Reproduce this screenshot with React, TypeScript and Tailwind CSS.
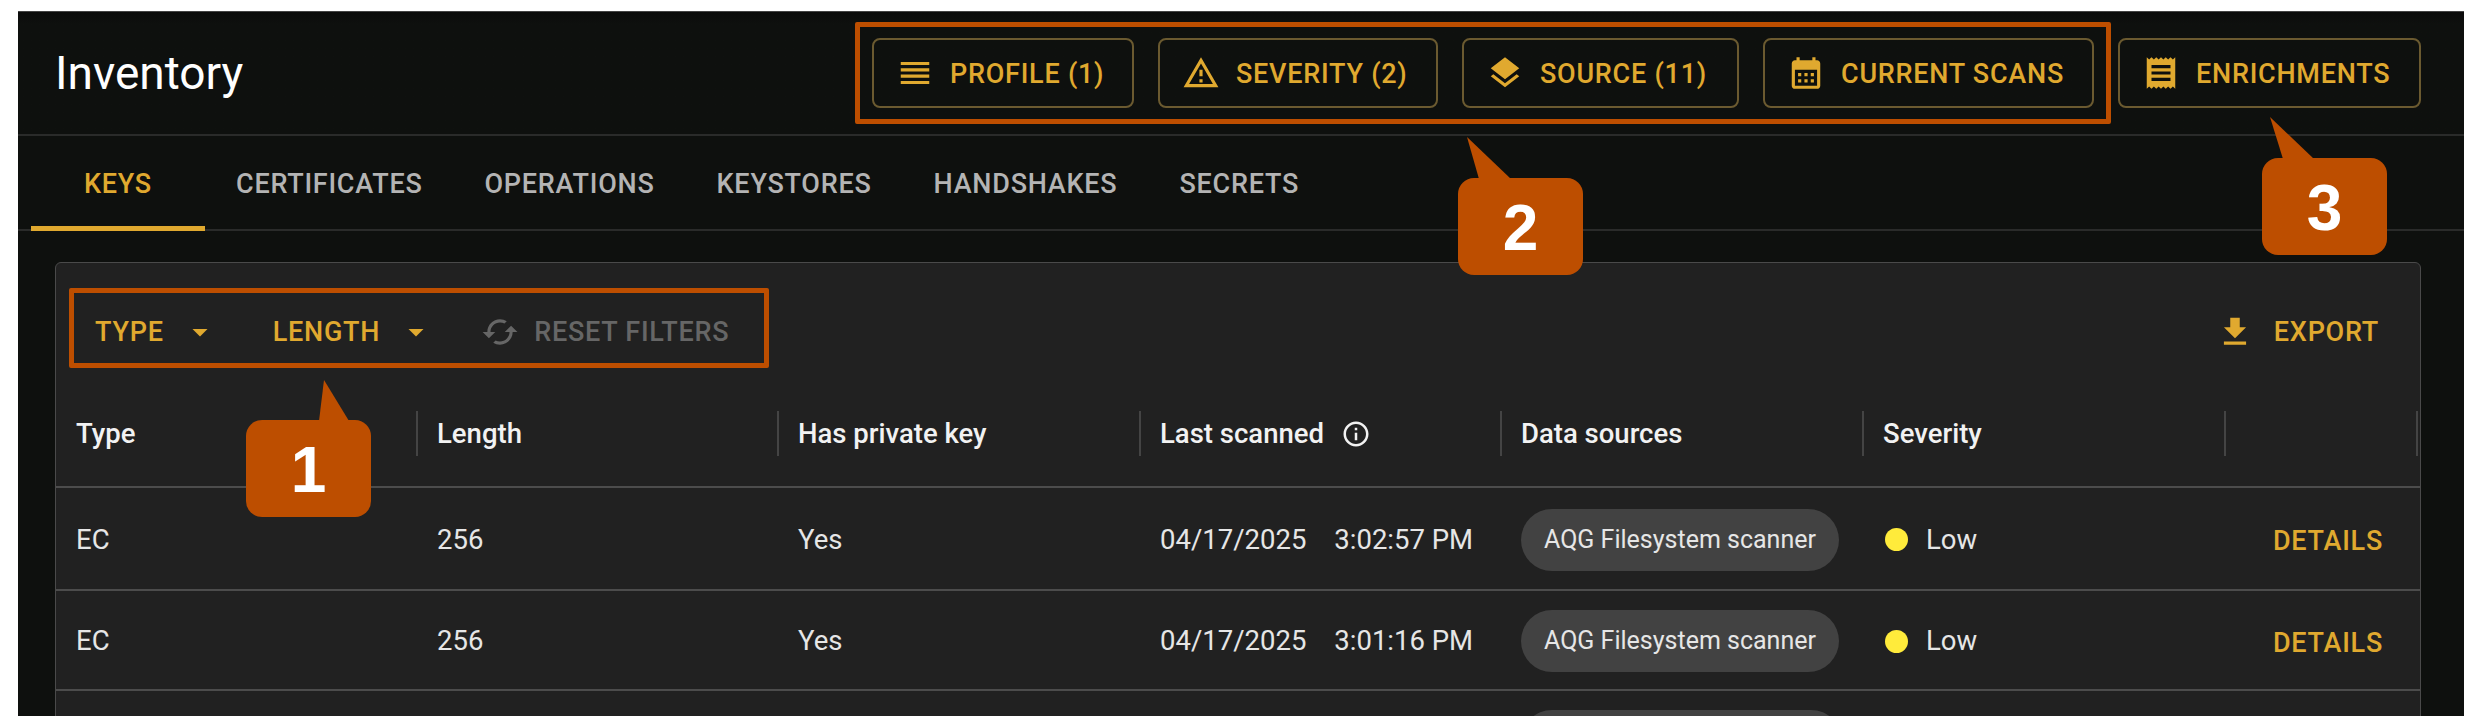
import React from "react";

const GOLD = "text-[#e0a92f]";

const icons = {
  profile: "M3 15h18v-2H3v2zm0 4h18v-2H3v2zm0-8h18V9H3v2zm0-6v2h18V5H3z",
  severity: "M12 5.99 19.53 19H4.47L12 5.99M12 2 1 21h22L12 2zm1 14h-2v2h2v-2zm0-6h-2v4h2v-4z",
  source: "m11.99 18.54-7.37-5.73L3 14.07l9 7 9-7-1.63-1.27-7.38 5.74zM12 16l7.36-5.73L21 9l-9-7-9 7 1.63 1.27L12 16z",
  calendar: "M19 4h-1V2h-2v2H8V2H6v2H5c-1.11 0-1.99.9-1.99 2L3 20c0 1.1.89 2 2 2h14c1.1 0 2-.9 2-2V6c0-1.1-.9-2-2-2zm0 16H5V10h14v10zM9 14H7v-2h2v2zm4 0h-2v-2h2v2zm4 0h-2v-2h2v2zm-8 4H7v-2h2v2zm4 0h-2v-2h2v2zm4 0h-2v-2h2v2z",
  receipt: "M18 17H6v-2h12v2zm0-4H6v-2h12v2zm0-4H6V7h12v2zM3 22l1.5-1.5L6 22l1.5-1.5L9 22l1.5-1.5L12 22l1.5-1.5L15 22l1.5-1.5L18 22l1.5-1.5L21 22V2l-1.5 1.5L18 2l-1.5 1.5L15 2l-1.5 1.5L12 2l-1.5 1.5L9 2 7.5 3.5 6 2 4.5 3.5 3 2v20z",
  cached: "m19 8-4 4h3c0 3.31-2.69 6-6 6-1.01 0-1.97-.25-2.8-.7l-1.46 1.46C8.97 19.54 10.43 20 12 20c4.42 0 8-3.58 8-8h3l-4-4zM6 12c0-3.31 2.69-6 6-6 1.01 0 1.97.25 2.8.7l1.46-1.46C15.03 4.46 13.57 4 12 4c-4.42 0-8 3.58-8 8H1l4 4 4-4H6z",
  download: "M5 20h14v-2H5v2zM19 9h-4V3H9v6H5l7 7 7-7z",
  info: "M11 7h2v2h-2zm0 4h2v6h-2zm1-9C6.48 2 2 6.48 2 12s4.48 10 10 10 10-4.48 10-10S17.52 2 12 2zm0 18c-4.41 0-8-3.59-8-8s3.59-8 8-8 8 3.59 8 8-3.59 8-8 8z",
  arrow: "m7 10 5 5 5-5z",
};

function Icon({ d, className }: { d: string; className: string }) {
  return (
    <svg viewBox="0 0 24 24" fill="currentColor" className={className}>
      <path d={d} />
    </svg>
  );
}

const BUTTONS = [
  { label: "PROFILE (1)", icon: icons.profile, width: "w-[262px]" },
  { label: "SEVERITY (2)", icon: icons.severity, width: "w-[280px]" },
  { label: "SOURCE (11)", icon: icons.source, width: "w-[277px]" },
  { label: "CURRENT SCANS", icon: icons.calendar, width: "w-[331px]" },
  { label: "ENRICHMENTS", icon: icons.receipt, width: "w-[303px]" },
];

const TABS = ["KEYS", "CERTIFICATES", "OPERATIONS", "KEYSTORES", "HANDSHAKES", "SECRETS"];

const HEADERS = ["Type", "Length", "Has private key", "Last scanned", "Data sources", "Severity", ""];

const ROWS = [
  { time: "3:02:57 PM", height: "h-[103px]" },
  { time: "3:01:16 PM", height: "h-[100px]" },
];

const COLS = "grid grid-cols-[362px_361px_362px_361px_362px_362px_1fr]";
const CELL = "pl-[19px] first:pl-[20px]";

// callout bubble with a pointer, sits on top of the page
function Callout({ n, left, top, tip, base }: { n: string; left: string; top: string; tip: string; base: string }) {
  return (
    <div className={`absolute ${left} ${top} w-[125px] h-[97px] rounded-[16px] bg-[#bd4e00] flex items-center justify-center`}>
      <svg className="absolute left-0 bottom-[96px] overflow-visible" width="125" height="45" viewBox="0 0 125 45">
        <polygon points={`${tip} ${base}`} fill="#bd4e00" />
      </svg>
      <span className="font-['Liberation_Sans',sans-serif] font-bold text-[64px] leading-none text-white mt-[2px]">{n}</span>
    </div>
  );
}

export default function App() {
  return (
    <div className="relative w-[2478px] h-[728px] bg-white overflow-hidden font-['Roboto',sans-serif]">
      <div className="ml-[18px] mt-[11px] w-[2446px] h-[705px] bg-[#0e100e] border-t border-[#444] overflow-hidden absolute">
        <header className="h-[124px] flex items-center justify-between border-b-2 border-[#2a2b2a] pl-[37px] pr-[43px] bg-gradient-to-b from-[#0b0b0b] from-0% to-[#0e100e] to-10%">
          <h1 className="text-[46px] font-normal text-white leading-none -mt-[1px]">Inventory</h1>
          <div className="flex gap-[24px]">
            {BUTTONS.map((b) => (
              <button
                key={b.label}
                className={`${b.width} h-[70px] rounded-[8px] border-2 border-[#6b5a30] flex items-center pl-[22px] gap-[16px] ${GOLD} text-[27px] font-medium tracking-[0.75px]`}
              >
                <Icon d={b.icon} className="w-[38px] h-[38px]" />
                <span className="pt-[2px]">{b.label}</span>
              </button>
            ))}
          </div>
        </header>

        <nav className="h-[95px] flex pl-[13px] border-b-2 border-[#2a2b2a]">
          {TABS.map((t, i) => (
            <div
              key={t}
              className={`relative px-[31px] min-w-[174px] pt-[3px] flex items-center justify-center text-[27px] font-medium tracking-[0.75px] ${i === 0 ? GOLD : "text-[#b4b4b4]"}`}
            >
              {t}
              {i === 0 && <div className="absolute left-0 right-0 bottom-[-2px] h-[5px] bg-[#e0a92f]" />}
            </div>
          ))}
        </nav>

        <main className="ml-[37px] mr-[43px] mt-[31px] rounded-t-[6px] border border-[#4a4a4a] bg-[#212121] h-[500px]">
          <div className="h-[118px] flex items-center justify-between pl-[39px] pr-[41px] pt-[20px] text-[27px] font-medium tracking-[0.75px]">
            <div className="flex items-center">
              <span className={GOLD}>TYPE</span>
              <Icon d={icons.arrow} className={`w-[36px] h-[36px] ml-[18px] ${GOLD}`} />
              <span className={`${GOLD} ml-[55px]`}>LENGTH</span>
              <Icon d={icons.arrow} className={`w-[36px] h-[36px] ml-[18px] ${GOLD}`} />
              <Icon d={icons.cached} className="w-[38px] h-[38px] ml-[47px] text-[#666]" />
              <span className="ml-[15px] text-[#666]">RESET FILTERS</span>
            </div>
            <div className={`flex items-center gap-[20px] ${GOLD}`}>
              <Icon d={icons.download} className="w-[38px] h-[38px]" />
              EXPORT
            </div>
          </div>

          <div className={`${COLS} h-[107px] items-center border-b-2 border-[#4c4c4c] text-[27.5px] font-medium text-[#f2f2f2]`}>
            {HEADERS.map((h) => (
              <div key={h} className={`${CELL} h-[45px] flex items-center gap-[17px] border-r-2 border-[#444] last:mr-[2px]`}>
                {h}
                {h === "Last scanned" && <Icon d={icons.info} className="w-[30px] h-[30px]" />}
              </div>
            ))}
          </div>

          {ROWS.map((r) => (
            <div key={r.time} className={`${COLS} ${r.height} pt-[2px] items-center border-b-2 border-[#4c4c4c] text-[27.5px] text-[#e6e6e6]`}>
              <div className={CELL}>EC</div>
              <div className={CELL}>256</div>
              <div className={CELL}>Yes</div>
              <div className={`${CELL} flex gap-[28px]`}>
                <span>04/17/2025</span>
                <span>{r.time}</span>
              </div>
              <div className={CELL}>
                <span className="inline-flex items-center h-[62px] px-[23px] rounded-full bg-[#424242] text-[25px] whitespace-nowrap">
                  AQG Filesystem scanner
                </span>
              </div>
              <div className={`${CELL} flex items-center gap-[18px]`}>
                <span className="ml-[2px] w-[23px] h-[23px] rounded-full bg-[#ffeb3b]" />
                Low
              </div>
              <div className={`pr-[37px] pt-[4px] text-right text-[27px] font-medium tracking-[0.75px] ${GOLD}`}>DETAILS</div>
            </div>
          ))}

          {/* third row is cut by the bottom of the screenshot, only the chip's top shows */}
          <div className={`${COLS} pt-[19px]`}>
            <div className="col-start-5 pl-[19px]">
              <div className="w-[321px] h-[62px] rounded-full bg-[#424242]" />
            </div>
          </div>
        </main>
      </div>

      {/* annotation frames */}
      <div className="absolute left-[855px] top-[22px] w-[1256px] h-[102px] border-[5px] border-[#bd4e00] rounded-[2px]" />
      <div className="absolute left-[69px] top-[288px] w-[700px] h-[80px] border-[5px] border-[#bd4e00] rounded-[2px]" />

      <Callout n="1" left="left-[246px]" top="top-[420px]" tip="78,4" base="73,45 103,45" />
      <Callout n="2" left="left-[1458px]" top="top-[178px]" tip="9,3" base="21,45 53,45" />
      <Callout n="3" left="left-[2262px]" top="top-[158px]" tip="8,3" base="21,45 52,45" />
    </div>
  );
}
